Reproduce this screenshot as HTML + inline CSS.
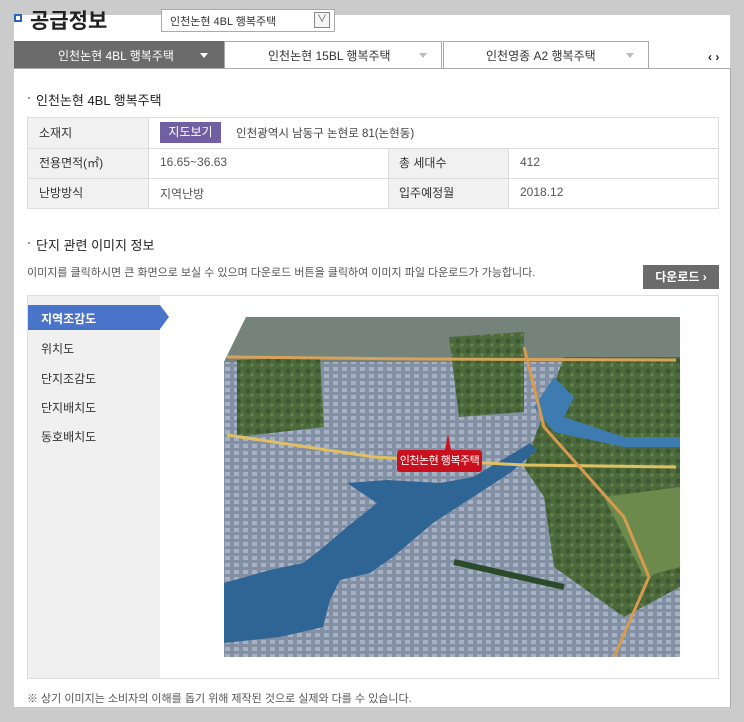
<!DOCTYPE html>
<html><head><meta charset="utf-8"><style>
*{margin:0;padding:0;box-sizing:border-box}
body{width:744px;height:722px;background:#cbcbcb;font-family:"Liberation Sans","Noto Sans CJK KR",sans-serif;position:relative;overflow:hidden;color:#333}
.abs{position:absolute}
.t{font-size:12px;white-space:nowrap}
</style></head><body>
<div class="abs" style="left:14px;top:15px;width:716px;height:692px;background:#fff"></div>
<div class="abs" style="left:14px;top:14px;width:8px;height:8px;border:2px solid #2a66b8;background:#fff"></div>
<div class="abs" style="left:30px;top:5px;font-size:21px;font-weight:bold;color:#222;white-space:nowrap">공급정보</div>
<div class="abs" style="left:161px;top:9px;width:174px;height:23px;border:1px solid #aaa;background:#fff"></div>
<div class="abs t" style="left:170px;top:13px;font-size:11px">인천논현 4BL 행복주택</div>
<div class="abs" style="left:314px;top:12px;width:16px;height:16px;border:1px solid #888;background:#f4f4f4;font-size:10px;text-align:center;line-height:14px;color:#555">∨</div>
<div class="abs" style="left:14px;top:41px;width:210px;height:28px;background:#6b6b6b"></div>
<div class="abs t" style="left:58px;top:47px;color:#fff;font-size:12px">인천논현 4BL 행복주택</div>
<div class="abs" style="left:200px;top:53px;border-left:4px solid transparent;border-right:4px solid transparent;border-top:5px solid #fff"></div>
<div class="abs" style="left:224px;top:41px;width:218px;height:28px;border:1px solid #aaa;border-bottom:none;background:#fff"></div>
<div class="abs t" style="left:268px;top:47px">인천논현 15BL 행복주택</div>
<div class="abs" style="left:419px;top:53px;border-left:4px solid transparent;border-right:4px solid transparent;border-top:5px solid #bbb"></div>
<div class="abs" style="left:443px;top:41px;width:206px;height:28px;border:1px solid #aaa;border-bottom:none;background:#fff"></div>
<div class="abs t" style="left:486px;top:47px">인천영종 A2 행복주택</div>
<div class="abs" style="left:626px;top:53px;border-left:4px solid transparent;border-right:4px solid transparent;border-top:5px solid #bbb"></div>
<div class="abs t" style="left:708px;top:50px;font-weight:bold;font-size:12px;color:#222">‹ ›</div>
<div class="abs" style="left:14px;top:68px;width:717px;height:1px;background:#aaa"></div>
<div class="abs" style="left:730px;top:68px;width:1px;height:640px;background:#aaa"></div>
<div class="abs" style="left:28px;top:97px;width:2px;height:2px;background:#999"></div>
<div class="abs t" style="left:36px;top:90px;font-size:13px;color:#222">인천논현 4BL 행복주택</div>
<div class="abs" style="left:27px;top:117px;width:692px;height:92px;border:1px solid #ddd"></div>
<div class="abs" style="left:28px;top:118px;width:120px;height:90px;background:#f1f1f1"></div>
<div class="abs" style="left:388px;top:148px;width:120px;height:60px;background:#f1f1f1"></div>
<div class="abs" style="left:28px;top:148px;width:690px;height:1px;background:#ddd"></div>
<div class="abs" style="left:28px;top:178px;width:690px;height:1px;background:#ddd"></div>
<div class="abs" style="left:148px;top:118px;width:1px;height:90px;background:#ddd"></div>
<div class="abs" style="left:388px;top:148px;width:1px;height:60px;background:#ddd"></div>
<div class="abs" style="left:508px;top:148px;width:1px;height:60px;background:#ddd"></div>
<div class="abs t" style="left:39px;top:124px">소재지</div>
<div class="abs" style="left:160px;top:122px;width:61px;height:21px;background:#6f5fa3;color:#fff;font-size:12px;text-align:center;line-height:21px">지도보기</div>
<div class="abs t" style="left:236px;top:125px;color:#444;font-size:11.5px">인천광역시 남동구 논현로 81(논현동)</div>
<div class="abs t" style="left:39px;top:154px">전용면적(㎡)</div>
<div class="abs t" style="left:160px;top:155px;color:#555">16.65~36.63</div>
<div class="abs t" style="left:399px;top:154px">총 세대수</div>
<div class="abs t" style="left:520px;top:155px;color:#555">412</div>
<div class="abs t" style="left:39px;top:184px">난방방식</div>
<div class="abs t" style="left:160px;top:185px;color:#555">지역난방</div>
<div class="abs t" style="left:399px;top:184px">입주예정월</div>
<div class="abs t" style="left:520px;top:185px;color:#555">2018.12</div>
<div class="abs" style="left:28px;top:242px;width:2px;height:2px;background:#999"></div>
<div class="abs t" style="left:36px;top:235px;font-size:13px;color:#222">단지 관련 이미지 정보</div>
<div class="abs t" style="left:27px;top:264px;font-size:11px;color:#555">이미지를 클릭하시면 큰 화면으로 보실 수 있으며 다운로드 버튼을 클릭하여 이미지 파일 다운로드가 가능합니다.</div>
<div class="abs" style="left:643px;top:265px;width:76px;height:24px;background:#6b6b6b;color:#fff;font-size:12px;font-weight:bold;text-align:center;line-height:24px">다운로드 ›</div>
<div class="abs" style="left:27px;top:295px;width:692px;height:384px;border:1px solid #ddd"></div>
<div class="abs" style="left:28px;top:296px;width:132px;height:382px;background:#f0f0f0"></div>
<div class="abs" style="left:28px;top:305px;width:132px;height:25px;background:#4a74c9"></div>
<div class="abs" style="left:160px;top:305px;border-top:12.5px solid transparent;border-bottom:12.5px solid transparent;border-left:9px solid #4a74c9"></div>
<div class="abs t" style="left:41px;top:310px;color:#fff;font-weight:bold">지역조감도</div>
<div class="abs t" style="left:41px;top:340px">위치도</div>
<div class="abs t" style="left:41px;top:370px">단지조감도</div>
<div class="abs t" style="left:41px;top:399px">단지배치도</div>
<div class="abs t" style="left:41px;top:428px">동호배치도</div>
<svg class="abs" style="left:224px;top:317px" width="456" height="340" viewBox="0 0 456 340">
<defs>
<clipPath id="c"><polygon points="22,0 456,0 456,340 0,340 0,45"/></clipPath>
<pattern id="city" width="9" height="7" patternUnits="userSpaceOnUse">
<rect width="9" height="7" fill="#8390a3"/><rect x="1" y="1" width="5" height="4" fill="#a7b1c4"/></pattern>
<pattern id="grn" width="10" height="10" patternUnits="userSpaceOnUse">
<rect width="10" height="10" fill="#4d6a3c"/><circle cx="4" cy="4" r="2.5" fill="#3c5830"/><circle cx="8" cy="8" r="1.5" fill="#6a8650"/></pattern>
</defs>
<g clip-path="url(#c)">
<rect width="456" height="340" fill="url(#city)"/>
<rect width="456" height="45" fill="#76837a"/>
<polygon points="13,43 96,40 100,110 13,120" fill="url(#grn)"/>
<polygon points="225,20 300,15 300,95 235,100" fill="url(#grn)"/>
<polygon points="340,40 456,40 456,270 400,300 330,250 320,180 300,150" fill="url(#grn)"/>
<polygon points="380,180 456,170 456,250 420,260" fill="#6b8a4c"/>
<polygon points="123,166 163,163 216,166 249,160 283,140 306,126 313,133 286,156 249,180 209,206 169,240 146,256 116,263 106,283 99,310 56,320 0,326 0,266 46,253 79,246 96,233 123,210 153,186" fill="#2f6594"/>
<polygon points="310,90 330,60 350,80 340,100 400,120 456,120 456,130 400,130 330,115" fill="#3e7bb0"/>
<polyline points="3,40 200,42 452,43" stroke="#d7a25a" stroke-width="3" fill="none"/>
<polyline points="3,118 150,140 300,148 452,150" stroke="#e0c060" stroke-width="3" fill="none"/>
<polyline points="300,30 320,110 400,200 425,260 390,340" stroke="#d69a50" stroke-width="3" fill="none"/>
<polyline points="230,245 340,270" stroke="#2b4a2a" stroke-width="6"/>
</g>
</svg>
<div class="abs" style="left:445px;top:434px;width:0;border-left:3px solid transparent;border-right:3px solid transparent;border-bottom:16px solid #c8101e"></div>
<div class="abs" style="left:397px;top:450px;width:85px;height:22px;background:#c8101e;border-radius:3px;color:#fff;font-size:11px;text-align:center;line-height:22px;white-space:nowrap;letter-spacing:-0.5px">인천논현 행복주택</div>
<div class="abs t" style="left:27px;top:690px;font-size:11px;color:#555">※ 상기 이미지는 소비자의 이해를 돕기 위해 제작된 것으로 실제와 다를 수 있습니다.</div>
</body></html>
